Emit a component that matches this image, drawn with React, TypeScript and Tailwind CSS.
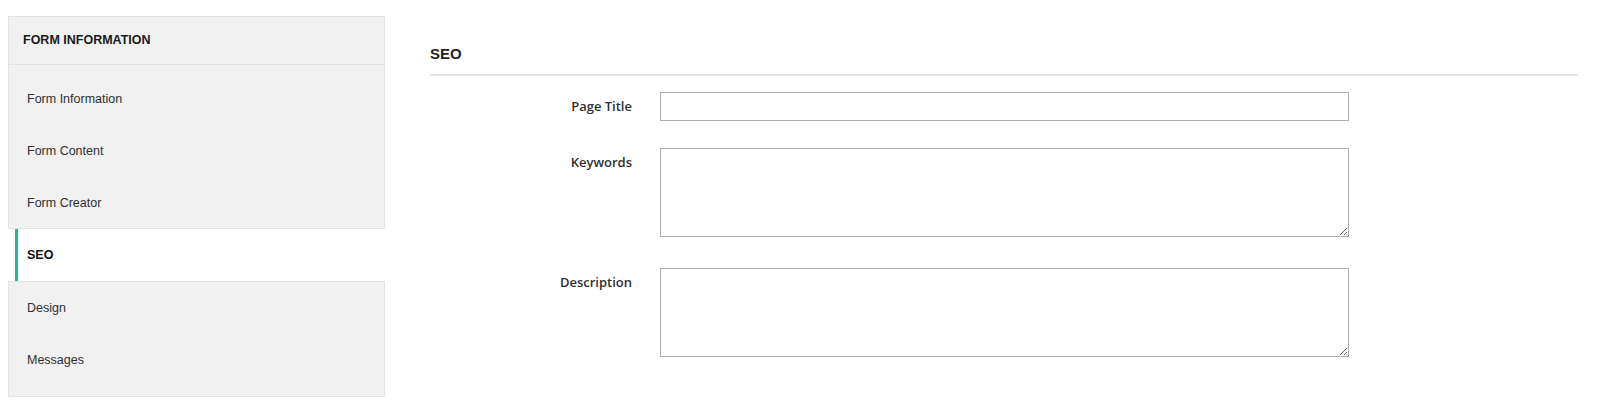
const NAV_TOP = ["Form Information", "Form Content", "Form Creator"];
const NAV_BOTTOM = ["Design", "Messages"];

function Sidebar() {
  return (
    <aside className="w-[377px] shrink-0 pt-4 font-['Liberation_Sans',Arial,sans-serif] text-[12.5px] text-[#303030]">
      <div className="border border-[#e3e3e3] bg-[#f1f1f1]">
        <div className="flex h-[48px] items-center border-b border-[#e3e3e3] pl-[14px] font-bold text-[#1a1a1a]">
          FORM INFORMATION
        </div>
        <ul className="pt-[7px]">
          {NAV_TOP.map((label) => (
            <li key={label} className="flex h-[52px] items-center pl-[18px] pt-[3px]">
              {label}
            </li>
          ))}
        </ul>
      </div>

      {/* active tab sits outside the grey box, indented a touch */}
      <div className="ml-[7px] flex h-[52px] items-center border-l-[3px] border-[#1fbc9c] bg-white pl-[9px] font-bold text-[#111]">
        SEO
      </div>

      <div className="border border-[#e3e3e3] bg-[#f1f1f1] pb-[10px]">
        <ul>
          {NAV_BOTTOM.map((label) => (
            <li key={label} className="flex h-[52px] items-center pl-[18px]">
              {label}
            </li>
          ))}
        </ul>
      </div>
    </aside>
  );
}

function Field({
  label,
  multiline,
  className,
}: {
  label: string;
  multiline?: boolean;
  className?: string;
}) {
  return (
    <div className={`flex items-start gap-[28px] ${className ?? ""}`}>
      <label className="w-[202px] shrink-0 pt-[5px] text-right font-['Open_Sans',sans-serif] text-[13px] leading-[18px] font-semibold text-[#303030]">
        {label}
      </label>
      {multiline ? (
        <textarea className="block h-[89px] w-[689px] border border-[#adadad] bg-white outline-none" />
      ) : (
        <input
          type="text"
          className="block h-[29px] w-[689px] border border-[#adadad] bg-white outline-none"
        />
      )}
    </div>
  );
}

export default function App() {
  return (
    <div className="flex min-h-[418px] bg-white pl-2 pr-[22px]">
      <Sidebar />
      <main className="ml-[45px] flex-1 pt-[45px]">
        <h2 className="border-b-2 border-[#e6e4e1] pb-[11px] font-['Liberation_Sans',Arial,sans-serif] text-[15px] leading-[18px] font-bold text-[#1f1f1f]">
          SEO
        </h2>
        <div className="pt-[16px]">
          <Field label="Page Title" className="mb-[27px]" />
          <Field label="Keywords" multiline className="mb-[31px]" />
          <Field label="Description" multiline />
        </div>
      </main>
    </div>
  );
}
